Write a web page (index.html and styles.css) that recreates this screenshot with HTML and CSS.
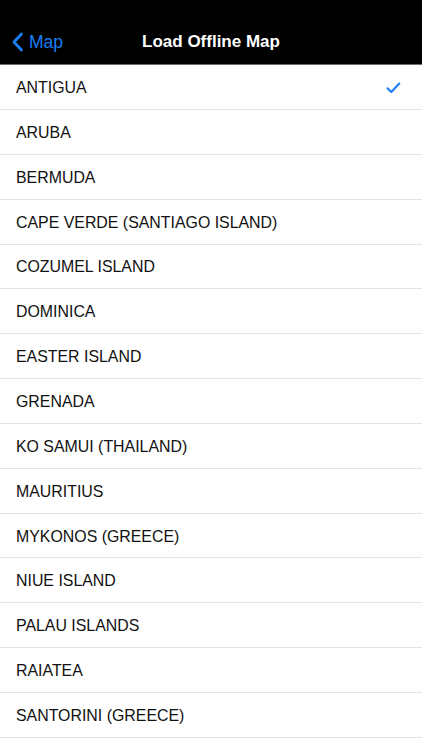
FILE: index.html
```html
<!DOCTYPE html>
<html lang="en">
<head>
    <meta charset="UTF-8">
    <meta name="viewport" content="width=device-width, initial-scale=1.0">
    <title>Load Offline Map</title>
    <link rel="stylesheet" href="styles.css">
</head>
<body>

    <div class="header">
        <div class="status-bar"></div>
        <div class="nav-bar">
            <a class="back" href="#">
                <svg class="chevron" width="12" height="20" viewBox="0 0 12 20">
                    <path d="M9.5 2 L2 10 L9.5 18" fill="none" stroke="#1a7ef6" stroke-width="2.8" stroke-linecap="round" stroke-linejoin="round"/>
                </svg>
                <span>Map</span>
            </a>
            <h1 class="title">Load Offline Map</h1>
        </div>
    </div>

    <ul class="map-list">
        <li class="map-item selected">
            <span>ANTIGUA</span>
            <svg class="check" width="15" height="12" viewBox="0 0 15 12">
                <path d="M1.5 6.3 L5.3 10 L13.3 1.5" fill="none" stroke="#1a7ef6" stroke-width="2.1" stroke-linecap="round" stroke-linejoin="round"/>
            </svg>
        </li>
        <li class="map-item"><span>ARUBA</span></li>
        <li class="map-item"><span>BERMUDA</span></li>
        <li class="map-item"><span>CAPE VERDE (SANTIAGO ISLAND)</span></li>
        <li class="map-item"><span>COZUMEL ISLAND</span></li>
        <li class="map-item"><span>DOMINICA</span></li>
        <li class="map-item"><span>EASTER ISLAND</span></li>
        <li class="map-item"><span>GRENADA</span></li>
        <li class="map-item"><span>KO SAMUI (THAILAND)</span></li>
        <li class="map-item"><span>MAURITIUS</span></li>
        <li class="map-item"><span>MYKONOS (GREECE)</span></li>
        <li class="map-item"><span>NIUE ISLAND</span></li>
        <li class="map-item"><span>PALAU ISLANDS</span></li>
        <li class="map-item"><span>RAIATEA</span></li>
        <li class="map-item"><span>SANTORINI (GREECE)</span></li>
    </ul>

</body>
</html>
```

FILE: styles.css
```css
body {
    font-family: 'Liberation Sans', Arial, sans-serif;
    margin: 0;
    padding: 0;
    background-color: #fff;
    color: #000;
    overflow: hidden;
}

.header {
    background-color: #000;
    height: 65.2px;
    box-sizing: border-box;
    border-bottom: 1px solid #6e6e6e;
}

.status-bar {
    height: 20.4px;
}

.nav-bar {
    height: 44px;
    display: flex;
    align-items: center;
    justify-content: center;
    position: relative;
}

.back {
    position: absolute;
    left: 12px;
    top: 0;
    bottom: 0;
    display: flex;
    align-items: center;
    gap: 5px;
    color: #1a7ef6;
    text-decoration: none;
    font-size: 17.5px;
}

.title {
    margin: 0;
    color: #fff;
    font-size: 17px;
    font-weight: bold;
}

.map-list {
    list-style: none;
    margin: 0;
    padding: 0;
}

.map-item {
    height: 44.85px;
    box-sizing: border-box;
    border-bottom: 1px solid #e3e3e6;
    display: flex;
    align-items: center;
    justify-content: space-between;
    padding: 2px 21px 0 16px;
    font-size: 15.9px;
    color: #111;
}
```
